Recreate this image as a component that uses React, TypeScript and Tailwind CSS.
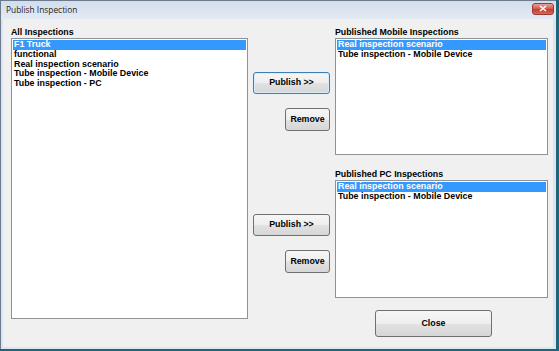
import React from 'react';

const allItems = [
    "F1 Truck",
    "functional",
    "Real inspection scenario",
    "Tube inspection - Mobile Device",
    "Tube inspection - PC",
];

const publishedItems = ["Real inspection scenario", "Tube inspection - Mobile Device"];

const btn =
    "flex items-center justify-center rounded-[3px] border text-[8.8px] font-bold text-black bg-[linear-gradient(#f6f6f6_0%,#eeeeee_50%,#e2e2e2_50%,#d6d6d6_100%)]";

function ListBox({ items, height }: { items: string[]; height: string }) {
    return (
        <div className={`${height} w-full border border-[#8f9297] bg-white p-[1px]`}>
            {items.map((item, index) => (
                <div
                    key={index}
                    className={`h-[9.75px] leading-[9.75px] pl-[1px] text-[8.9px] font-bold whitespace-nowrap ${
                        index === 0 ? "bg-[#3399ff] text-white" : "text-black"
                    }`}
                >
                    {item}
                </div>
            ))}
        </div>
    );
}

function ButtonGroup({ focused }: { focused?: boolean }) {
    return (
        <div className="w-[87px] flex flex-col items-end pr-[5px] pt-[45px]">
            <div
                className={`${btn} w-[77px] h-[22px] ${
                    focused ? "border-[#3c7fb1] shadow-[inset_0_0_0_1px_#d6eefc]" : "border-[#707070]"
                }`}
            >
                Publish &gt;&gt;
            </div>
            <div className={`${btn} w-[45px] h-[23px] mt-[14px] border-[#707070]`}>Remove</div>
        </div>
    );
}

export default function App() {
    return (
        <div
            className="w-[559px] h-[351px] bg-[#1d667a] overflow-hidden"
            style={{ fontFamily: '"Liberation Sans", Arial, sans-serif' }}
        >
            <div className="w-[556px] h-[349px] flex flex-col border-l border-t border-[#6d7b8c] bg-[#dbe5f1]">
                {/* title bar */}
                <div className="h-[18px] flex items-center justify-between pl-[5px] pr-[2px] bg-[linear-gradient(#d2deed,#e3eaf3)]">
                    <span className="text-[8.4px] text-[#1e1e1e]" style={{ fontFamily: '"Open Sans", "Noto Sans", sans-serif' }}>
                        Publish Inspection
                    </span>
                    <div className="w-[22px] h-[12px] mt-[-3px] rounded-[3px] border border-[#9a3b33] bg-[linear-gradient(#e8a093,#d0584c_50%,#c03a2e_50%,#d56a55)] flex items-center justify-center">
                        <svg width="8" height="7" viewBox="0 0 8 7">
                            <path d="M1 1 L7 6 M7 1 L1 6" stroke="#ffffff" strokeWidth="1.6" />
                        </svg>
                    </div>
                </div>

                {/* client area */}
                <div className="flex-1 ml-[2px] mr-[3px] mb-[2px] bg-[#f0f0f0] flex pl-[8px] pt-[8px]">
                    <div className="w-[237px] flex flex-col">
                        <div className="h-[11px] leading-[11px] text-[8.8px] font-bold">All Inspections</div>
                        <ListBox items={allItems} height="h-[281px]" />
                    </div>

                    <div className="w-[300px] flex flex-col">
                        <div className="flex">
                            <ButtonGroup focused />
                            <div className="w-[213px] flex flex-col">
                                <div className="h-[11px] leading-[11px] text-[8.8px] font-bold">Published Mobile Inspections</div>
                                <ListBox items={publishedItems} height="h-[117px]" />
                            </div>
                        </div>

                        <div className="flex mt-[14px]">
                            <ButtonGroup />
                            <div className="w-[213px] flex flex-col">
                                <div className="h-[11px] leading-[11px] text-[8.8px] font-bold">Published PC Inspections</div>
                                <ListBox items={publishedItems} height="h-[118px]" />
                                <div className={`${btn} w-[117px] h-[27px] mt-[12px] ml-[40px] border-[#707070]`}>Close</div>
                            </div>
                        </div>
                    </div>
                </div>
            </div>
        </div>
    );
}
